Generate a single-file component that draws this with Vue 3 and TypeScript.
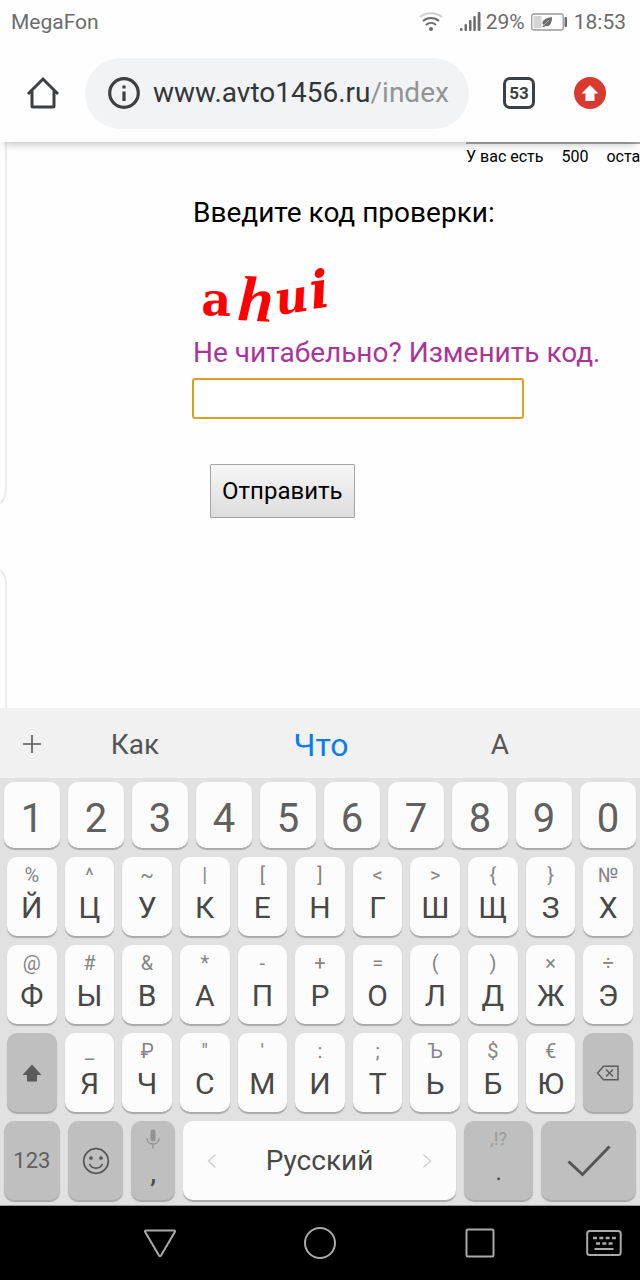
<script setup lang="ts">
import { ref } from 'vue'

interface Key {
  main: string
  hint: string
}

const toKeys = (letters: string, hints: string): Key[] => {
  const marks = hints.split(' ')
  return letters.split(' ').map((main, i) => ({ main, hint: marks[i] }))
}

const code = ref('')
const digits = '1234567890'.split('')
const topRow = toKeys('Й Ц У К Е Н Г Ш Щ З Х', '% ^ ~ | [ ] < > { } №')
const homeRow = toKeys('Ф Ы В А П Р О Л Д Ж Э', '@ # & * - + = ( ) × ÷')
const lowRow = toKeys('Я Ч С М И Т Ь Б Ю', '_ ₽ " \' : ; Ъ $ €')

const type = (char: string) => {
  code.value += char.toLowerCase()
}
const erase = () => {
  code.value = code.value.slice(0, -1)
}
</script>

<template>
  <div class="phone">
    <header class="status">
      <span class="carrier">MegaFon</span>
      <svg class="wifi" width="24" height="20" viewBox="0 0 24 20" fill="none" stroke-width="2" aria-hidden="true">
        <path d="M1 5C7 0 17 0 23 5" stroke="#cfcfcf" />
        <path d="M4 9C8.500 5 15.500 5 20 9M7 13C10 10.200 14 10.200 17 13" stroke="#6c6c6c" />
        <circle cx="12" cy="17" r="2" fill="#6c6c6c" />
      </svg>
      <svg class="signal" width="22" height="20" viewBox="0 0 22 20" fill="#6c6c6c" aria-hidden="true">
        <rect x="1" y="16" width="2.500" height="3" rx="1" />
        <rect x="5.500" y="12" width="2.500" height="7" rx="1" />
        <rect x="10" y="8" width="2.500" height="11" rx="1" />
        <rect x="14.300" y="4" width="2.500" height="15" rx="1" />
        <rect x="18.700" y="0" width="2.800" height="19" rx="1" />
      </svg>
      <span class="percent">29%</span>
      <svg class="battery" width="38" height="20" viewBox="0 0 38 20" aria-hidden="true">
        <rect x="1.700" y="2" width="31.500" height="16" rx="2" fill="none" stroke="#9a9a9a" stroke-width="1.300" />
        <rect x="3.500" y="4" width="8" height="12" fill="#d4d4d4" />
        <rect x="34.500" y="5" width="2.500" height="10" rx="1" fill="#6c6c6c" />
        <path d="M22 5C16 6 12 8 12.500 12L14 13L12 15H14L15.500 14C20 15 22 11 22 5Z" fill="#6c6c6c" />
        <path d="M14 13L19 8" stroke="#d4d4d4" stroke-width=".7" />
      </svg>
      <span class="clock">18:53</span>
    </header>

    <nav class="toolbar">
      <button class="tool" type="button" aria-label="Home">
        <svg width="34" height="34" viewBox="0 0 34 34" fill="none" stroke="#3c4043" stroke-width="3">
          <path d="M2 18L17 3L32 18M6 15V30Q6 31 7 31H27Q28 31 28 30V15" />
        </svg>
      </button>
      <button class="address" type="button">
        <svg width="32" height="32" viewBox="0 0 32 32" fill="none" stroke="#3c4043" aria-hidden="true">
          <circle cx="16" cy="16" r="14.300" stroke-width="3.200" />
          <path d="M16 8.500V11.500M16 14.500V24" stroke-width="3.200" />
        </svg>
        <span class="url">www.avto1456.ru<span class="path">/index</span></span>
      </button>
      <button class="tool tabs" type="button">53</button>
      <button class="tool" type="button" aria-label="Update">
        <svg width="32" height="32" viewBox="0 0 32 32">
          <circle cx="16" cy="16" r="16" fill="#d93a2f" />
          <path d="M16 8L24.500 16.500H20.500V24H11.500V16.500H7.500Z" fill="#fff" />
        </svg>
      </button>
    </nav>

    <main class="page">
      <div class="edges">
        <div class="edge first"></div>
        <div class="edge second"></div>
      </div>
      <form class="form" @submit.prevent>
        <p class="counter"><span>У вас есть</span><span>500</span><span>оста</span></p>
        <label class="prompt" for="code">Введите код проверки:</label>
        <svg class="captcha" width="150" height="66" viewBox="0 0 150 66" fill="#f00" aria-hidden="true">
          <text class="ca" transform="translate(9 54) rotate(2)">a</text>
          <text class="ch" transform="translate(45 59) rotate(3)">h</text>
          <text class="cu" transform="translate(85 54) rotate(-8)">u</text>
          <text class="ci" transform="translate(120 48) rotate(-8)">i</text>
        </svg>
        <a class="refresh" href="#">Не читабельно? Изменить код.</a>
        <input id="code" v-model="code" class="code" type="text" autocomplete="off" />
        <button class="send" type="submit">Отправить</button>
      </form>
    </main>

    <section class="keyboard">
      <div class="suggest">
        <button class="plus" type="button" aria-label="Add">
          <svg width="20" height="20" viewBox="0 0 20 20" stroke="#555" stroke-width="1.600">
            <path d="M10 1V19M1 10H19" />
          </svg>
        </button>
        <button type="button">Как</button>
        <button class="best" type="button">Что</button>
        <button type="button">А</button>
      </div>
      <div class="keys">
        <div class="row digits">
          <button v-for="d in digits" :key="d" class="key digit" type="button" @click="type(d)">{{ d }}</button>
        </div>
        <div class="row">
          <button v-for="k in topRow" :key="k.main" class="key" type="button" @click="type(k.main)">
            <span class="hint">{{ k.hint }}</span><span class="main">{{ k.main }}</span>
          </button>
        </div>
        <div class="row">
          <button v-for="k in homeRow" :key="k.main" class="key" type="button" @click="type(k.main)">
            <span class="hint">{{ k.hint }}</span><span class="main">{{ k.main }}</span>
          </button>
        </div>
        <div class="row">
          <button class="key dark" type="button" aria-label="Shift">
            <svg width="20" height="18" viewBox="0 0 20 18" fill="#5a5a5a">
              <path d="M10 0.500L19.500 11H15V17.500H5V11H.5Z" />
            </svg>
          </button>
          <button v-for="k in lowRow" :key="k.main" class="key" type="button" @click="type(k.main)">
            <span class="hint">{{ k.hint }}</span><span class="main">{{ k.main }}</span>
          </button>
          <button class="key dark" type="button" aria-label="Backspace" @click="erase">
            <svg width="24" height="16" viewBox="0 0 24 16" fill="none" stroke="#5a5a5a" stroke-width="1.400">
              <path d="M1.500 8L7.500 1.300H22V14.700H7.500ZM10 4.500L17 11.500M17 4.500L10 11.500" />
            </svg>
          </button>
        </div>
        <div class="row bottom">
          <button class="key dark num" type="button">123</button>
          <button class="key dark" type="button" aria-label="Emoji">
            <svg width="28" height="28" viewBox="0 0 28 28" fill="none" stroke="#555" stroke-width="1.700">
              <circle cx="14" cy="14" r="12.300" />
              <path d="M7.500 17C10 22.500 18 22.500 20.500 17" />
              <circle cx="9" cy="11" r="1" fill="#555" />
              <circle cx="19" cy="11" r="1" fill="#555" />
            </svg>
          </button>
          <button class="key dark" type="button" @click="type(',')">
            <span class="hint">
              <svg width="14" height="20" viewBox="0 0 14 20" fill="none" stroke="#929292" stroke-width="1.300" aria-hidden="true">
                <rect x="4.500" y=".5" width="5" height="12" rx="2.500" fill="#929292" stroke="none" />
                <path d="M1 9C1 17 13 17 13 9M7 15V19.500" />
              </svg>
            </span>
            <span class="main">,</span>
          </button>
          <button class="key space" type="button" @click="type(' ')">
            <svg width="10" height="16" viewBox="0 0 10 16" fill="none" stroke="#cfcfcf" stroke-width="1.400" aria-hidden="true">
              <path d="M8.500 1.500L1.500 8L8.500 14.500" />
            </svg>
            <span>Русский</span>
            <svg width="10" height="16" viewBox="0 0 10 16" fill="none" stroke="#cfcfcf" stroke-width="1.400" aria-hidden="true">
              <path d="M1.500 1.500L8.500 8L1.500 14.500" />
            </svg>
          </button>
          <button class="key dark" type="button" @click="type('.')">
            <span class="hint faint">,!?</span><span class="main dot">.</span>
          </button>
          <button class="key dark" type="button" aria-label="Done">
            <svg width="44" height="32" viewBox="0 0 44 32" fill="none" stroke="#555" stroke-width="3">
              <path d="M1.500 16.500L15.500 29.500L42.500 1.500" />
            </svg>
          </button>
        </div>
      </div>
    </section>

    <nav class="system">
      <span></span>
      <button type="button" aria-label="Back">
        <svg width="34" height="34" viewBox="0 0 34 34"><path d="M3 4.500H31Q32.500 4.500 31.800 6L18 29.500Q17 31 16 29.500L2.200 6Q1.500 4.500 3 4.500Z" /></svg>
      </button>
      <button type="button" aria-label="Home screen">
        <svg width="34" height="34" viewBox="0 0 34 34"><circle cx="17" cy="17" r="15" /></svg>
      </button>
      <button type="button" aria-label="Recent apps">
        <svg width="34" height="34" viewBox="0 0 34 34"><rect x="3.500" y="3.500" width="27" height="27" rx="1.500" /></svg>
      </button>
      <button class="hide" type="button" aria-label="Hide keyboard">
        <svg width="36" height="34" viewBox="0 0 36 34">
          <rect x="1.200" y="5" width="33.500" height="24" rx="2.500" />
          <path d="M7 12H30" stroke-dasharray="4 2.300" stroke-width="2.500" />
          <path d="M10 17.500H28" stroke-dasharray="4 2.300" stroke-width="2.500" />
          <path d="M8.500 23H27.500" />
        </svg>
      </button>
    </nav>
  </div>
</template>

<style>
body {
  margin: 0;
}
</style>

<style scoped>
.phone {
  display: flex;
  flex-direction: column;
  min-height: 100vh;
  overflow: hidden;
  background: #fefefe;
  color: #000;
  font-family: Roboto, "Noto Sans", sans-serif;
}
.phone * {
  box-sizing: border-box;
}
button {
  margin: 0;
  padding: 0;
  border: 0;
  background: none;
  color: inherit;
  font: inherit;
}
svg {
  display: block;
  flex: none;
}
.status {
  display: flex;
  align-items: center;
  height: 44px;
  padding: 0 14px 0 11px;
  color: #6c6c6c;
  font-size: 21px;
}
.carrier {
  flex: 1;
}
.signal {
  margin: 0 5px 0 16px;
}
.battery {
  margin: 0 6px 0 5px;
}
.toolbar {
  display: flex;
  align-items: center;
  height: 98px;
  padding: 0 34px 0 26px;
  z-index: 1;
  box-shadow: 0 6px 8px -4px #00000040;
  background: #fefefe;
}
.address {
  display: flex;
  flex: 1;
  align-items: center;
  gap: 13px;
  height: 71px;
  margin: 0 34px 0 25px;
  padding: 0 0 0 23px;
  overflow: hidden;
  border-radius: 36px;
  background: #f1f3f5;
}
.url {
  color: #333639;
  font-size: 28px;
  line-height: 36px;
  white-space: nowrap;
}
.path {
  color: #919395;
}
.tabs {
  width: 32px;
  height: 32px;
  margin-right: 39px;
  border: 3px solid #3c4043;
  border-radius: 7px;
  color: #3c4043;
  font-size: 17px;
  font-weight: 700;
  line-height: 26px;
}
.page {
  display: flex;
  flex: 1;
}
.edges {
  display: flex;
  flex-direction: column;
  width: 7px;
  overflow: hidden;
}
.edge {
  align-self: flex-end;
  width: 40px;
  border: 2px solid #ebebeb;
}
.first {
  height: 368px;
  border-top: 0;
  border-radius: 0 0 20px 0;
  border-bottom-color: #f6f6f6;
}
.second {
  flex: 1;
  margin-top: 54px;
  border-bottom: 0;
  border-radius: 0 20px 0 0;
  border-top-color: #f4f4f4;
}
.form {
  display: flex;
  flex: 1;
  flex-direction: column;
  align-items: flex-start;
  min-width: 0;
  padding-left: 185px;
}
.counter {
  display: flex;
  gap: 18px;
  align-self: stretch;
  margin: 0 0 0 274px;
  padding-top: 3px;
  border-top: 2px solid #aaa;
  font-size: 16px;
  line-height: 20px;
  white-space: nowrap;
}
.prompt {
  margin: 28px 0 0 1px;
  font-size: 28px;
  line-height: 36px;
}
.captcha {
  margin: 30px 0 8px;
  overflow: visible;
}
.ca {
  font: 700 46px "DejaVu Serif", serif;
}
.ch {
  font: italic 700 64px "Liberation Serif", serif;
}
.cu {
  font: italic 700 46px "DejaVu Serif", serif;
}
.ci {
  font: italic 700 52px "DejaVu Serif", serif;
}
.refresh {
  margin-left: 1px;
  color: #a9359a;
  font-size: 28px;
  line-height: 36px;
  text-decoration: none;
  white-space: nowrap;
}
.code {
  width: 332px;
  max-width: 100%;
  height: 41px;
  margin-top: 7px;
  padding: 0 6px;
  border: 2px solid #df9f20;
  border-radius: 3px;
  outline: 0;
  background: #fff;
  font: 26px Roboto, sans-serif;
}
.send {
  height: 54px;
  margin: 45px 0 0 18px;
  padding: 0 11px;
  border: 1px solid #a5a5a5;
  border-radius: 1px;
  background: linear-gradient(#f7f7f7, #dcdcdc);
  font-size: 24px;
}
.suggest {
  display: grid;
  grid-template-columns: 64fr 142fr 230fr 128fr 76fr;
  align-items: center;
  height: 70px;
  background: #f1f1f1;
  color: #555;
  font-size: 28px;
  line-height: 36px;
}
.suggest button {
  padding-top: 4px;
}
.suggest .plus {
  display: flex;
  justify-content: center;
  padding-top: 2px;
}
.suggest .best {
  color: #087cf0;
  font-size: 32px;
}
.keys {
  display: grid;
  gap: 9px;
  padding: 4px 0 5px;
  border-bottom: 1px solid #999;
  background: #e1e1e1;
}
.row {
  display: grid;
  grid-template-columns: repeat(11, minmax(0, 1fr));
  gap: 8px;
  height: 79px;
  padding: 0 7px;
}
.row.digits {
  grid-template-columns: repeat(10, minmax(0, 1fr));
  height: 66px;
  padding: 0 4px;
}
.row.bottom {
  grid-template-columns: 56fr 56fr 44fr 274fr 70fr 95fr;
  padding: 0 4px;
}
.key {
  display: flex;
  flex-direction: column;
  align-items: center;
  justify-content: center;
  border-radius: 10px;
  background: #fcfcfc;
  box-shadow: 0 2px 1px #00000040;
  color: #484848;
}
.key.dark {
  background: #bfbfbf;
}
.digit {
  padding-top: 6px;
  color: #606060;
  font-size: 40px;
}
.hint {
  display: flex;
  align-items: center;
  height: 28px;
  color: #858585;
  font-size: 20px;
}
.main {
  height: 44px;
  font-size: 30px;
  line-height: 38px;
}
.faint {
  color: #999;
  font-size: 18px;
}
.dot {
  font-size: 24px;
}
.num {
  color: #606060;
  font-size: 22px;
}
.space {
  flex-direction: row;
  justify-content: space-between;
  padding: 0 24px;
  font-size: 28px;
}
.system {
  display: grid;
  grid-template-columns: 80fr 160fr 160fr 160fr 80fr;
  align-items: center;
  height: 74px;
  background: #000;
}
.system button {
  display: flex;
  justify-content: center;
}
.system .hide {
  padding-left: 8px;
}
.system svg {
  fill: none;
  stroke: #aaa;
  stroke-width: 2;
}
</style>
